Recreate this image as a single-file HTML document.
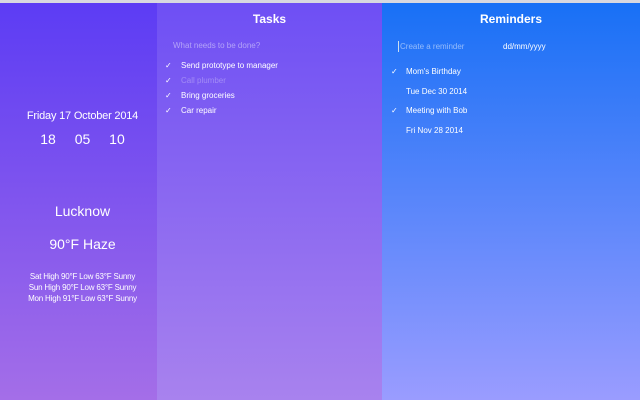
<!DOCTYPE html>
<html><head><style>
*{margin:0;padding:0;box-sizing:border-box}
body{width:640px;height:400px;overflow:hidden;font-family:"Liberation Sans",sans-serif;color:#fff;position:relative;background:#d8d8e0}
.col{position:absolute;top:3px;bottom:0}
#l{left:0;width:157px;background:linear-gradient(#5c3cf4,#a46ee8);text-align:center}
#l div{left:8px;right:0}
#m{left:157px;width:225px;background:linear-gradient(#6e4ff4,#a882ee)}
#r{left:382px;width:258px;background:linear-gradient(#1870f6,#9a9cff)}
h2{font-size:12px;font-weight:bold;text-align:center;margin-top:9px}
.t{position:absolute;font-size:8px}
.ck{position:absolute;font-size:8px}
</style></head><body>
<div class="col" id="l">
<div style="position:absolute;top:107px;font-size:11px;letter-spacing:-0.2px">Friday 17 October 2014</div>
<div style="position:absolute;top:128px;font-size:14px;word-spacing:15px">18 05 10</div>
<div style="position:absolute;top:200px;font-size:14px">Lucknow</div>
<div style="position:absolute;top:233px;font-size:14px">90°F Haze</div>
<div style="position:absolute;top:268px;font-size:8px;line-height:11px;letter-spacing:-0.2px">Sat High 90°F Low 63°F Sunny<br>Sun High 90°F Low 63°F Sunny<br>Mon High 91°F Low 63°F Sunny</div>
</div>
<div class="col" id="m">
<h2>Tasks</h2>
<div class="t" style="left:16px;top:38px;color:rgba(255,255,255,.45)">What needs to be done?</div>
<div class="ck" style="left:8px;top:58px">✓</div><div class="t" style="left:24px;top:58px">Send prototype to manager</div>
<div class="ck" style="left:8px;top:73px">✓</div><div class="t" style="left:24px;top:73px;color:rgba(255,255,255,.3)">Call plumber</div>
<div class="ck" style="left:8px;top:88px">✓</div><div class="t" style="left:24px;top:88px">Bring groceries</div>
<div class="ck" style="left:8px;top:103px">✓</div><div class="t" style="left:24px;top:103px">Car repair</div>
</div>
<div class="col" id="r">
<h2>Reminders</h2>
<div style="position:absolute;left:16px;top:38px;width:1px;height:11px;background:#cde"></div>
<div class="t" style="left:18px;top:39px;color:rgba(255,255,255,.5)">Create a reminder</div>
<div class="t" style="left:121px;top:39px">dd/mm/yyyy</div>
<div class="ck" style="left:9px;top:64px">✓</div><div class="t" style="left:24px;top:64px">Mom's Birthday</div>
<div class="t" style="left:24px;top:84px">Tue Dec 30 2014</div>
<div class="ck" style="left:9px;top:103px">✓</div><div class="t" style="left:24px;top:103px">Meeting with Bob</div>
<div class="t" style="left:24px;top:123px">Fri Nov 28 2014</div>
</div>
</body></html>
